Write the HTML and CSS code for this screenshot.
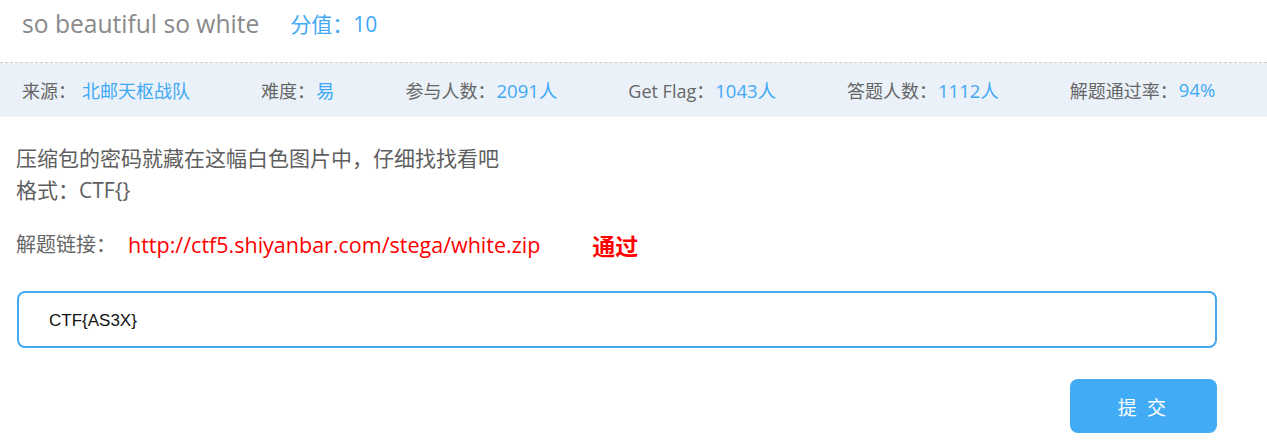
FILE: index.html
```html
<!DOCTYPE html>
<html lang="zh-CN">
<head>
<meta charset="utf-8">
<title>so beautiful so white</title>
<link rel="stylesheet" href="styles.css">
</head>
<body>
<div class="page">
  <header class="head">
    <span class="title">so beautiful so white</span>
    <span class="score">分值：10</span>
  </header>
  <div class="stats">
    <div class="stat"><span class="label">来源：</span><span class="val val-src">北邮天枢战队</span></div>
    <div class="stat"><span class="label">难度：</span><span class="val">易</span></div>
    <div class="stat"><span class="label">参与人数：</span><span class="val">2091人</span></div>
    <div class="stat"><span class="label">Get Flag：</span><span class="val">1043人</span></div>
    <div class="stat"><span class="label">答题人数：</span><span class="val">1112人</span></div>
    <div class="stat"><span class="label">解题通过率：</span><span class="val">94%</span></div>
  </div>
  <main class="content">
    <p class="desc">压缩包的密码就藏在这幅白色图片中，仔细找找看吧<br>格式：CTF{}</p>
    <p class="linkrow"><span class="linklabel">解题链接：</span><a class="link" href="#">http://ctf5.shiyanbar.com/stega/white.zip</a><span class="passed">通过</span></p>
    <input class="answer" type="text" value="CTF{AS3X}">
    <div class="actions"><button class="submit" type="button">提 交</button></div>
  </main>
</div>
</body>
</html>
```

FILE: styles.css
```css
html, body {
  margin: 0;
  padding: 0;
  background: #ffffff;
}
body {
  font-family: "Open Sans", "Noto Sans CJK SC", sans-serif;
  color: #666666;
}
.head {
  height: 63px;
  box-sizing: border-box;
  padding: 8px 0 0 22px;
  border-bottom: 1px dashed #cccccc;
  display: flex;
  align-items: flex-start;
}
.title {
  font-size: 24.6px;
  line-height: 32px;
  color: #8a8a8a;
}
.score {
  font-size: 21px;
  line-height: 32px;
  color: #3fa9f5;
  margin-left: 31px;
}
.stats {
  height: 54px;
  background: #eaf1f9;
  display: flex;
  align-items: center;
  padding: 0 22px;
  gap: 71px;
  font-size: 18px;
}
.stat {
  display: flex;
  white-space: nowrap;
}
.label {
  color: #666666;
}
.val {
  color: #3fa9f5;
  margin-left: 1px;
  font-size: 18.5px;
}
.val-src {
  margin-left: 6px;
  font-size: 18px;
}
.content {
  padding: 0 0 0 16px;
}
.desc {
  margin: 25px 0 0 0;
  font-size: 21px;
  line-height: 32px;
  color: #5e5e5e;
}
.linkrow {
  margin: 23px 0 0 0;
  font-size: 20px;
  line-height: 32px;
  color: #666666;
  display: flex;
  align-items: center;
}
.linklabel {
  font-size: 20px;
}
.link {
  color: #ff0000;
  text-decoration: none;
  margin-left: 12px;
  font-size: 21.5px;
}
.passed {
  color: #ff0000;
  font-family: "Noto Sans CJK SC", sans-serif;
  font-weight: 700;
  font-size: 23px;
  margin-left: 52px;
}
.answer {
  display: block;
  box-sizing: border-box;
  margin: 30px 0 0 1px;
  width: 1200px;
  height: 57px;
  border: 2px solid #45a8f3;
  border-radius: 8px;
  padding: 2px 0 0 30px;
  font-family: "Liberation Sans", Arial, sans-serif;
  font-size: 17px;
  color: #111111;
  outline: none;
}
.actions {
  width: 1201px;
  display: flex;
  justify-content: flex-end;
  margin-top: 31px;
}
.submit {
  width: 147px;
  height: 54px;
  border: none;
  border-radius: 8px;
  background: #42abf6;
  color: #ffffff;
  font-family: "Noto Sans CJK SC", sans-serif;
  font-size: 19px;
  letter-spacing: 3px;
  padding: 0;
  cursor: pointer;
}
```
